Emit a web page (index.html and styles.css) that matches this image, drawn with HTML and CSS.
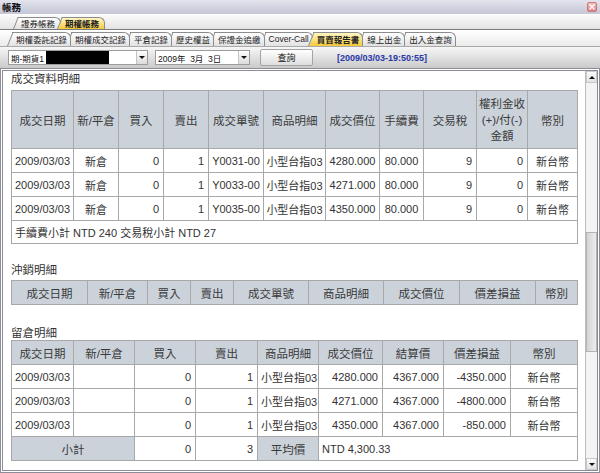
FILE: index.html
```html
<!DOCTYPE html>
<html lang="zh-Hant">
<head>
<meta charset="utf-8">
<title>帳務</title>
<link rel="stylesheet" href="styles.css">
</head>
<body>
<div class="window">
  <div class="titlebar">
    <span class="title">帳務</span>
    <span class="close"><svg width="6" height="6" viewBox="0 0 6 6"><path d="M0.5 0.5L5.5 5.5M5.5 0.5L0.5 5.5" stroke="#fff" stroke-width="1.4"/></svg></span>
  </div>
  <div class="tabs1">
    <span class="tab t1">證券帳務</span>
    <span class="tab t1 active">期權帳務</span>
  </div>
  <div class="tabs2">
    <span class="tab t2">期權委託記錄</span>
    <span class="tab t2">期權成交記錄</span>
    <span class="tab t2">平倉記錄</span>
    <span class="tab t2">歷史權益</span>
    <span class="tab t2">保證金追繳</span>
    <span class="tab t2 latin">Cover-Call</span>
    <span class="tab t2 active">買賣報告書</span>
    <span class="tab t2">線上出金</span>
    <span class="tab t2">出入金查詢</span>
  </div>
  <div class="toolbar">
    <div class="select s1"><span class="val">期-期貨1</span><span class="redact"></span><span class="drop"><i class="tri"></i></span></div>
    <div class="select s2"><span class="val">2009年&nbsp; 3月&nbsp; 3日</span><span class="drop"><i class="tri"></i></span></div>
    <button class="btn">查詢</button>
    <span class="stamp">[2009/03/03-19:50:55]</span>
  </div>
  <div class="panel">
    <div class="content">
      <div class="sec sec1">成交資料明細</div>
      <table class="grid">
        <colgroup>
          <col style="width:62px"><col style="width:45px"><col style="width:45px"><col style="width:45px"><col style="width:55px"><col style="width:62px"><col style="width:54px"><col style="width:44px"><col style="width:53px"><col style="width:51px"><col style="width:50px">
        </colgroup>
        <tr class="h58">
          <th>成交日期</th><th>新/平倉</th><th>買入</th><th>賣出</th><th>成交單號</th><th>商品明細</th><th>成交價位</th><th>手續費</th><th>交易稅</th><th class="multi">權利金收<br>(+)/付(-)<br>金額</th><th>幣別</th>
        </tr>
        <tr class="r24">
          <td class="c">2009/03/03</td><td class="c">新倉</td><td class="r">0</td><td class="r">1</td><td class="c">Y0031-00</td><td class="c">小型台指03</td><td class="c">4280.000</td><td class="c">80.000</td><td class="r">9</td><td class="r">0</td><td class="c">新台幣</td>
        </tr>
        <tr class="r24">
          <td class="c">2009/03/03</td><td class="c">新倉</td><td class="r">0</td><td class="r">1</td><td class="c">Y0033-00</td><td class="c">小型台指03</td><td class="c">4271.000</td><td class="c">80.000</td><td class="r">9</td><td class="r">0</td><td class="c">新台幣</td>
        </tr>
        <tr class="r24">
          <td class="c">2009/03/03</td><td class="c">新倉</td><td class="r">0</td><td class="r">1</td><td class="c">Y0035-00</td><td class="c">小型台指03</td><td class="c">4350.000</td><td class="c">80.000</td><td class="r">9</td><td class="r">0</td><td class="c">新台幣</td>
        </tr>
        <tr class="r23">
          <td colspan="11" class="l">手續費小計 NTD 240 交易稅小計 NTD 27</td>
        </tr>
      </table>

      <div class="sec sec2">沖銷明細</div>
      <table class="grid">
        <colgroup>
          <col style="width:76px"><col style="width:60px"><col style="width:43px"><col style="width:43px"><col style="width:75px"><col style="width:75px"><col style="width:76px"><col style="width:76px"><col style="width:42px">
        </colgroup>
        <tr class="r24">
          <th>成交日期</th><th>新/平倉</th><th>買入</th><th>賣出</th><th>成交單號</th><th>商品明細</th><th>成交價位</th><th>價差損益</th><th>幣別</th>
        </tr>
      </table>

      <div class="sec sec3">留倉明細</div>
      <table class="grid">
        <colgroup>
          <col style="width:62px"><col style="width:61px"><col style="width:61px"><col style="width:62px"><col style="width:61px"><col style="width:64px"><col style="width:61px"><col style="width:67px"><col style="width:67px">
        </colgroup>
        <tr class="r24">
          <th>成交日期</th><th>新/平倉</th><th>買入</th><th>賣出</th><th>商品明細</th><th>成交價位</th><th>結算價</th><th>價差損益</th><th>幣別</th>
        </tr>
        <tr class="r24">
          <td class="c">2009/03/03</td><td></td><td class="r">0</td><td class="r">1</td><td class="l">小型台指03</td><td class="r">4280.000</td><td class="r">4367.000</td><td class="r">-4350.000</td><td class="c">新台幣</td>
        </tr>
        <tr class="r24">
          <td class="c">2009/03/03</td><td></td><td class="r">0</td><td class="r">1</td><td class="l">小型台指03</td><td class="r">4271.000</td><td class="r">4367.000</td><td class="r">-4800.000</td><td class="c">新台幣</td>
        </tr>
        <tr class="r24">
          <td class="c">2009/03/03</td><td></td><td class="r">0</td><td class="r">1</td><td class="l">小型台指03</td><td class="r">4350.000</td><td class="r">4367.000</td><td class="r">-850.000</td><td class="c">新台幣</td>
        </tr>
        <tr class="r24">
          <th colspan="2">小計</th><td class="r">0</td><td class="r">3</td><th>平均價</th><td colspan="4" class="l">NTD 4,300.33</td>
        </tr>
      </table>
    </div>
    <div class="scrollbar">
      <div class="sb-btn"><i class="tri up"></i></div>
      <div class="sb-track"><div class="sb-thumb"></div></div>
      <div class="sb-btn"><i class="tri"></i></div>
    </div>
  </div>
</div>
</body>
</html>
```

FILE: styles.css
```css
* { box-sizing: border-box; }
html, body { margin: 0; padding: 0; }
body {
  width: 600px;
  height: 473px;
  overflow: hidden;
  background: #fff;
  font-family: "Liberation Sans", "Noto Sans CJK TC", sans-serif;
  color: #222;
}
.window {
  width: 600px;
  height: 473px;
  display: flex;
  flex-direction: column;
  background: #e6e6ec;
}

/* title bar */
.titlebar {
  height: 14px;
  flex: none;
  display: flex;
  align-items: center;
  justify-content: space-between;
  padding: 0 3px 0 2px;
  background: linear-gradient(#e4e4ee, #c5c6d6);
}
.title {
  font-family: "Noto Sans CJK TC", sans-serif;
  font-size: 9.5px;
  font-weight: 700;
  line-height: 12px;
  color: #111;
}
.close {
  width: 10px;
  height: 10px;
  display: flex;
  align-items: center;
  justify-content: center;
  background: linear-gradient(#f6c0c0, #e08080);
  border: 1px solid #c77a7a;
  border-radius: 2px;
}

/* tab strips */
.tabs1 {
  height: 16px;
  flex: none;
  display: flex;
  align-items: flex-end;
  padding-left: 18px;
  background: linear-gradient(#fafafa, #e4e4e4);
  border-top: 1px solid #fff;
  border-bottom: 1px solid #7c7c7c;
}
.tabs2 {
  height: 17px;
  flex: none;
  display: flex;
  align-items: flex-end;
  padding-left: 12px;
  background: linear-gradient(#ffffff, #ebebeb);
  border-bottom: 1px solid #a9a9a9;
}
.tab {
  position: relative;
  z-index: 0;
  font-family: "Noto Sans CJK TC", "Liberation Sans", sans-serif;
  font-size: 8.5px;
  color: #222;
  white-space: nowrap;
  background: linear-gradient(#ffffff, #e2e2e2);
  border-top: 1px solid #8c8c8c;
  border-right: 1px solid #8c8c8c;
  border-top-right-radius: 6px;
}
.tab::before {
  content: "";
  position: absolute;
  z-index: -1;
  top: -1px;
  bottom: 0;
  left: -5px;
  width: 10px;
  background: inherit;
  border-left: 1px solid #8c8c8c;
  border-top: 1px solid #8c8c8c;
  transform: skewX(-22deg);
  transform-origin: bottom left;
}
.t1 {
  height: 12px;
  line-height: 11px;
  padding: 0 5px 0 3px;
  margin-right: 1px;
}
.t2 {
  height: 14px;
  line-height: 13px;
  padding: 0 3px 0 4px;
}
.t2.latin { font-family: "Liberation Sans", sans-serif; font-size: 8.5px; padding-right: 3px; }
.tabs2 .tab:nth-child(1) { z-index: 9; }
.tabs2 .tab:nth-child(2) { z-index: 8; }
.tabs2 .tab:nth-child(3) { z-index: 7; }
.tabs2 .tab:nth-child(4) { z-index: 6; }
.tabs2 .tab:nth-child(5) { z-index: 5; }
.tabs2 .tab:nth-child(6) { z-index: 4; }
.tabs2 .tab:nth-child(8) { z-index: 3; }
.tabs2 .tab:nth-child(9) { z-index: 2; }
.tab.active {
  z-index: 20;
  font-weight: 700;
  background: linear-gradient(#fff6c4, #f5cb3a);
}

/* toolbar */
.toolbar {
  height: 21px;
  flex: none;
  display: flex;
  align-items: center;
  padding-left: 8px;
  background: linear-gradient(#f7f7f7, #cacaca);
}
.select {
  height: 15px;
  display: flex;
  align-items: center;
  background: #fff;
  border: 1px solid #9c9c9c;
  font-family: "Liberation Sans", "Noto Sans CJK TC", sans-serif;
  font-size: 8.5px;
  color: #111;
}
.s1 { width: 140px; padding-left: 2px; }
.s2 { width: 95px; margin-left: 7px; padding-left: 2px; }
.redact {
  width: 63px;
  height: 13px;
  margin-left: 2px;
  background: #000;
}
.drop {
  margin-left: auto;
  width: 11px;
  height: 13px;
  display: flex;
  align-items: center;
  justify-content: center;
  background: linear-gradient(#fdfdfd, #dcdcdc);
  border-left: 1px solid #c4c4c4;
}
.tri {
  display: block;
  width: 0;
  height: 0;
  border-left: 3px solid transparent;
  border-right: 3px solid transparent;
  border-top: 3px solid #111;
}
.tri.up {
  border-top: 0;
  border-bottom: 3px solid #111;
}
.btn {
  width: 53px;
  height: 17px;
  margin-left: 10px;
  padding: 0;
  background: linear-gradient(#ffffff, #dedede);
  border: 1px solid #a4a4a4;
  border-radius: 2px;
  font-family: "Noto Sans CJK TC", sans-serif;
  font-size: 9px;
  line-height: 14px;
  color: #111;
}
.stamp {
  margin-left: 24px;
  font-family: "Liberation Sans", sans-serif;
  font-size: 9px;
  font-weight: 700;
  color: #2838a8;
}

/* content panel */
.panel {
  flex: 1;
  min-height: 0;
  display: flex;
  background: #fff;
  border: 3px double #8c8c98;
}
.content {
  flex: 1;
  min-width: 0;
  padding-left: 8px;
  overflow: hidden;
}
.sec {
  font-size: 11.5px;
  color: #333;
}
.sec1 { height: 19px; line-height: 16px; }
.sec2 { height: 36px; padding-top: 18px; line-height: 16px; }
.sec3 { height: 35px; padding-top: 21px; line-height: 14px; }

.grid {
  width: 567px;
  table-layout: fixed;
  border-collapse: collapse;
  font-size: 11px;
  color: #333;
}
.grid th, .grid td {
  border: 1px solid #a8a8a8;
  padding: 0 3px;
  font-weight: normal;
  white-space: nowrap;
  overflow: hidden;
}
.grid th {
  background: #cbd2da;
  text-align: center;
  color: #3a3a3a;
  font-size: 11.5px;
  padding: 0 1px;
}
.grid .multi { line-height: 16px; }
.h58 { height: 58px; }
.r24 { height: 24px; }
.r23 { height: 23px; }
.grid .c { text-align: center; padding: 0 1px; }
.grid .r { text-align: right; padding-right: 4px; }
.grid .l { text-align: left; }

/* scrollbar */
.scrollbar {
  width: 12px;
  flex: none;
  display: flex;
  flex-direction: column;
  background: #f3f3f3;
  border-left: 1px solid #bdbdbd;
}
.sb-btn {
  height: 12px;
  flex: none;
  display: flex;
  align-items: center;
  justify-content: center;
  background: linear-gradient(#fbfbfb, #e2e2e2);
  border: 1px solid #c9c9c9;
}
.sb-track {
  flex: 1;
  display: flex;
  flex-direction: column;
}
.sb-thumb {
  margin-top: 149px;
  height: 120px;
  background: linear-gradient(90deg, #d4d4d4, #ececec);
  border: 1px solid #b4b4b4;
}
```
